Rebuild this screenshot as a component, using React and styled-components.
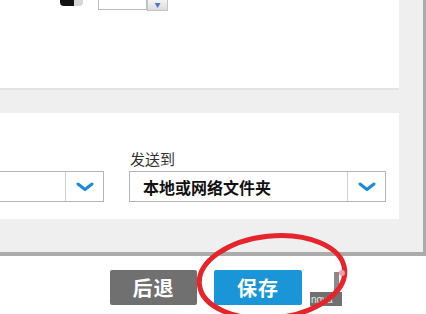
import React from 'react'
import styled, { createGlobalStyle } from 'styled-components'

// --- Styled Components --- //
const Global = createGlobalStyle`
  html, body {
    margin: 0;
    padding: 0;
    background: #fff;
  }
  body {
    font-family: "Noto Sans CJK SC", "Liberation Sans", sans-serif;
  }
`

const Page = styled.div`
  position: relative;
  width: 426px;
  height: 314px;
  overflow: hidden;
  background: #fff;
`

const Dialog = styled.div`
  display: flex;
  height: 252px;
  background: #efefef;
  border-bottom: 4px solid #ababab;
  border-right: 3px solid #ababab;
  width: 423px;
`

const Main = styled.div`
  width: 399px;
  display: flex;
  flex-direction: column;
`

const Panel = styled.div`
  background: #fff;
  height: ${p => p.h}px;
  position: relative;
`

const Band = styled.div`
  height: 23px;
  border-top: 2px solid #e3e3e3;
  background: #efefef;
`

const TopRow = styled.div`
  display: flex;
  align-items: flex-start;
  margin-left: 60px;
`

const Swatch = styled.div`
  width: 23px;
  height: 6px;
  display: flex;
  border-radius: 0 0 4px 4px;
  overflow: hidden;
`

const SwatchPart = styled.div`
  flex: ${p => p.f};
  background: ${p => p.c};
`

const SmallInput = styled.div`
  margin-left: 15px;
  width: 47px;
  height: 9px;
  border: 1px solid #bdbdbd;
  border-top: none;
`

const SmallBtn = styled.div`
  width: 19px;
  height: 10px;
  background: linear-gradient(#f4f4f4, #dcdcdc);
  border: 1px solid #c4c4c4;
  border-top: none;
  display: flex;
  align-items: center;
  justify-content: center;
  color: #4a78c8;
  font-size: 6px;
  line-height: 1;
`

const FieldRow = styled.div`
  display: flex;
  align-items: flex-end;
  padding-top: 36px;
  gap: 25px;
  margin-left: -40px;
`

const Field = styled.div`
  display: flex;
  flex-direction: column;
`

const Label = styled.div`
  font-size: 15px;
  color: #333;
  line-height: 20px;
  height: 22px;
  padding-left: 1px;
`

const Select = styled.div`
  display: flex;
  width: ${p => p.w}px;
  height: 29px;
  border: 1px solid #b5b5b5;
  background: #fff;
`

const SelectText = styled.div`
  flex: 1;
  display: flex;
  align-items: center;
  padding-left: 13px;
  font-size: 16px;
  font-weight: bold;
  color: #111;
`

const SelectBtn = styled.div`
  width: 37px;
  border-left: 1px solid #cfcfcf;
  display: flex;
  align-items: center;
  justify-content: center;
`

const Buttons = styled.div`
  display: flex;
  gap: 17px;
  padding: 14px 0 0 110px;
`

const Button = styled.div`
  width: ${p => p.w}px;
  height: 35px;
  border-radius: 2px;
  background: ${p => p.bg};
  color: #fff;
  font-size: 20px;
  font-weight: bold;
  display: flex;
  align-items: center;
  justify-content: center;
  letter-spacing: 1px;
`

const Overlay = styled.svg`
  position: absolute;
  left: 0;
  top: 0;
  pointer-events: none;
`

const Chevron = () => (
  <svg width="18" height="10" viewBox="0 0 18 10">
    <path d="M2 2 L9 7.5 L16 2" fill="none" stroke="#1b8bd6" strokeWidth="3" strokeLinecap="round" strokeLinejoin="round" />
  </svg>
)

// --- Component --- //
const App = () => (
  <Page>
    <Global />
    <Dialog>
      <Main>
        <Panel h={88}>
          <TopRow>
            <Swatch>
              <SwatchPart f={3} c="#111" />
              <SwatchPart f={2} c="#d6d6d6" />
            </Swatch>
            <SmallInput />
            <SmallBtn>▼</SmallBtn>
          </TopRow>
        </Panel>
        <Band />
        <Panel h={106}>
          <FieldRow>
            <Field>
              <Select w={142}>
                <SelectText />
                <SelectBtn><Chevron /></SelectBtn>
              </Select>
            </Field>
            <Field>
              <Label>发送到</Label>
              <Select w={255}>
                <SelectText>本地或网络文件夹</SelectText>
                <SelectBtn><Chevron /></SelectBtn>
              </Select>
            </Field>
          </FieldRow>
        </Panel>
      </Main>
    </Dialog>
    <Buttons>
      <Button w={87} bg="#707070">后退</Button>
      <Button w={88} bg="#1a95d8">保存</Button>
    </Buttons>
    <Overlay width="426" height="314" viewBox="0 0 426 314">
      <rect x="334" y="272" width="5" height="20" fill="#8a8a8a" />
      <rect x="310" y="292" width="32" height="14" fill="#707070" />
      <text x="311" y="303" fontSize="10" fill="#e8e8e8" fontFamily="Liberation Sans, sans-serif">ngya</text>
      <ellipse cx="272" cy="277" rx="73" ry="41" fill="none" stroke="#e5252b" strokeWidth="5" transform="rotate(-6 272 277)" />
      <circle cx="342" cy="273" r="3" fill="#f2a0a6" />
    </Overlay>
  </Page>
)

export default App
